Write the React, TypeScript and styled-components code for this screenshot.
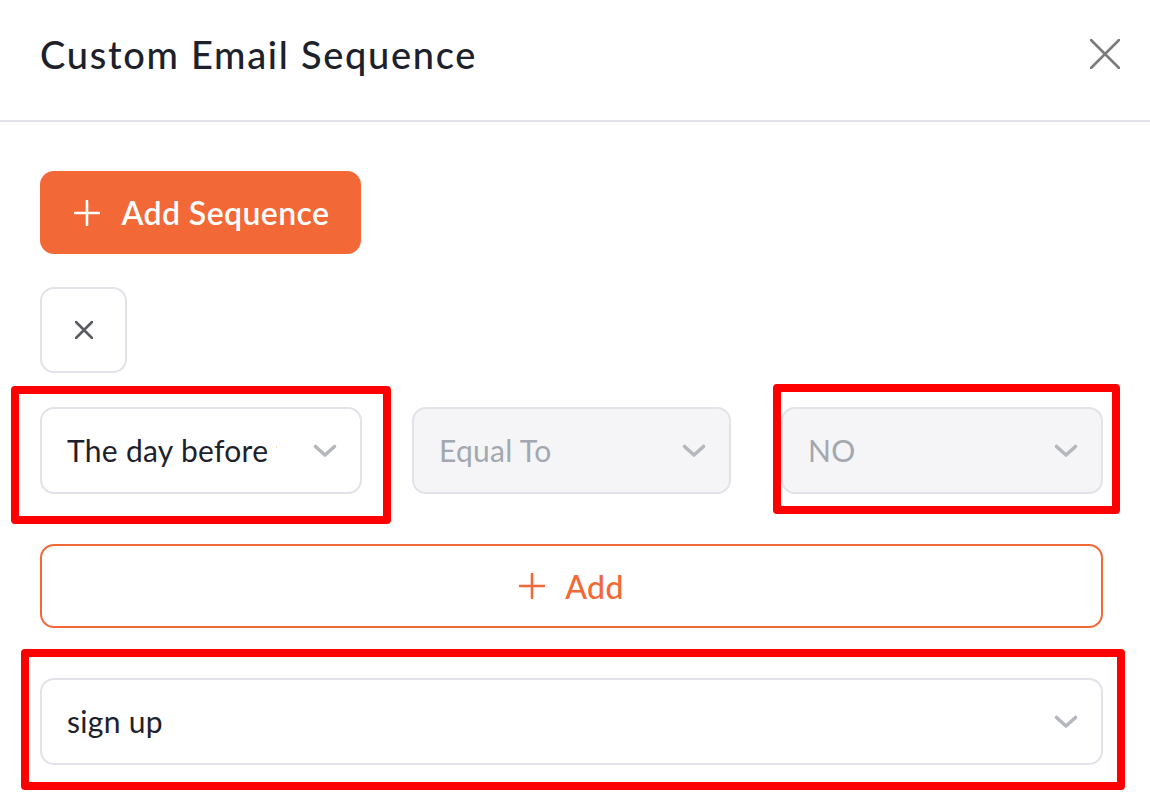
import React from "react";
import styled, { createGlobalStyle } from "styled-components";

const Orange = "#f26836";
const Ink = "#1d212b";
const Muted = "#a3a8b0";
const Line = "#e2e3e8";

const GlobalStyle = createGlobalStyle`
  html, body {
    margin: 0;
    padding: 0;
    background: #ffffff;
    font-family: Lato, "Liberation Sans", sans-serif;
    color: ${Ink};
  }
`;

const Page = styled.div`
  width: 1150px;
  height: 800px;
  overflow: hidden;
  background: #fff;
`;

const Header = styled.header`
  height: 122px;
  border-bottom: 2px solid ${Line};
  display: flex;
  align-items: center;
  justify-content: space-between;
  padding: 0 28px 0 40px;
  box-sizing: border-box;
`;

const Title = styled.h1`
  margin: 0 0 12px;
  font-size: 38px;
  font-weight: 500;
  letter-spacing: 1.7px;
  color: ${Ink};
`;

const CloseButton = styled.button`
  border: none;
  background: none;
  padding: 0;
  width: 34px;
  height: 34px;
  margin-bottom: 12px;
  display: flex;
  align-items: center;
  justify-content: center;
  cursor: pointer;
`;

const Body = styled.div`
  padding: 49px 47px 0 40px;
  display: flex;
  flex-direction: column;
  align-items: flex-start;
`;

const PrimaryButton = styled.button`
  height: 83px;
  width: 321px;
  border: none;
  border-radius: 14px;
  background: ${Orange};
  color: #fff;
  font-family: Lato, "Liberation Sans", sans-serif;
  font-size: 32px;
  font-weight: 600;
  letter-spacing: 0.4px;
  display: flex;
  align-items: center;
  justify-content: center;
  gap: 22px;
  padding: 0 0 0 2px;
  margin-bottom: 33px;
  cursor: pointer;
`;

const IconBox = styled.button`
  width: 87px;
  height: 86px;
  border: 2px solid ${Line};
  border-radius: 14px;
  background: #fff;
  display: flex;
  align-items: center;
  justify-content: center;
  margin-bottom: 34px;
  cursor: pointer;
`;

const Row = styled.div`
  display: flex;
  gap: 50px;
  width: 100%;
  margin-bottom: 50px;
`;

const Highlight = styled.div<{ $t: number; $r: number; $b: number; $l: number; $grow?: boolean }>`
  position: relative;
  flex: ${(p) => (p.$grow ? 1 : "0 0 auto")};
  width: ${(p) => (p.$grow ? "100%" : "auto")};

  &::after {
    content: "";
    position: absolute;
    top: ${(p) => -p.$t}px;
    right: ${(p) => -p.$r}px;
    bottom: ${(p) => -p.$b}px;
    left: ${(p) => -p.$l}px;
    border: 8px solid #ff0000;
    border-radius: 4px;
    pointer-events: none;
  }
`;

const Select = styled.div<{ $disabled?: boolean; $full?: boolean }>`
  box-sizing: border-box;
  width: ${(p) => (p.$full ? "100%" : "322px")};
  height: 87px;
  border: 2px solid ${Line};
  border-radius: 14px;
  background: ${(p) => (p.$disabled ? "#f5f5f7" : "#fff")};
  color: ${(p) => (p.$disabled ? Muted : Ink)};
  display: flex;
  align-items: center;
  padding: 0 22px 0 25px;
  font-size: 30px;
  letter-spacing: 0.3px;
  gap: 35px;
`;

const SelectValue = styled.span`
  flex: 1;
  white-space: nowrap;
  overflow: hidden;
  padding-bottom: 2px;
`;

const OutlineButton = styled.button`
  box-sizing: border-box;
  width: 100%;
  height: 84px;
  border: 2px solid ${Orange};
  border-radius: 14px;
  background: #fff;
  color: ${Orange};
  font-family: Lato, "Liberation Sans", sans-serif;
  font-size: 32px;
  font-weight: 500;
  letter-spacing: 0.4px;
  display: flex;
  align-items: center;
  justify-content: center;
  gap: 20px;
  margin-bottom: 50px;
  cursor: pointer;
`;

const Chevron = () => (
  <svg width="26" height="16" viewBox="0 0 26 16" fill="none">
    <path d="M3.5 3.5l9.5 8.5 9.5-8.5" stroke="#b4b7bd" strokeWidth="3.6" strokeLinecap="round" strokeLinejoin="round" />
  </svg>
);

const Plus = ({ color }: { color: string }) => (
  <svg width="26" height="26" viewBox="0 0 26 26" fill="none">
    <path d="M13 1v24M1 13h24" stroke={color} strokeWidth="2.6" strokeLinecap="round" />
  </svg>
);

const Cross = ({ size, color, width }: { size: number; color: string; width: number }) => (
  <svg width={size} height={size} viewBox={`0 0 ${size} ${size}`} fill="none">
    <path d={`M1 1L${size - 1} ${size - 1}M${size - 1} 1L1 ${size - 1}`} stroke={color} strokeWidth={width} strokeLinecap="round" />
  </svg>
);

const Dropdown = ({ value, disabled, full }: { value: string; disabled?: boolean; full?: boolean }) => (
  <Select $disabled={disabled} $full={full}>
    <SelectValue>{value}</SelectValue>
    <Chevron />
  </Select>
);

export default function App() {
  return (
    <Page>
      <GlobalStyle />
      <Header>
        <Title>Custom Email Sequence</Title>
        <CloseButton aria-label="Close">
          <Cross size={30} color="#7b7b7d" width={2.6} />
        </CloseButton>
      </Header>
      <Body>
        <PrimaryButton>
          <Plus color="#ffffff" />
          Add Sequence
        </PrimaryButton>
        <IconBox aria-label="Remove">
          <Cross size={18} color="#575c64" width={2.6} />
        </IconBox>
        <Row>
          <Highlight $t={21} $r={29} $b={30} $l={29}>
            <Dropdown value="The day before the event" />
          </Highlight>
          <Dropdown value="Equal To" disabled />
          <Highlight $t={23} $r={17} $b={20} $l={8}>
            <Dropdown value="NO" disabled />
          </Highlight>
        </Row>
        <OutlineButton>
          <Plus color={Orange} />
          Add
        </OutlineButton>
        <Highlight $t={29} $r={22} $b={25} $l={19} $grow>
          <Dropdown value="sign up" full />
        </Highlight>
      </Body>
    </Page>
  );
}
